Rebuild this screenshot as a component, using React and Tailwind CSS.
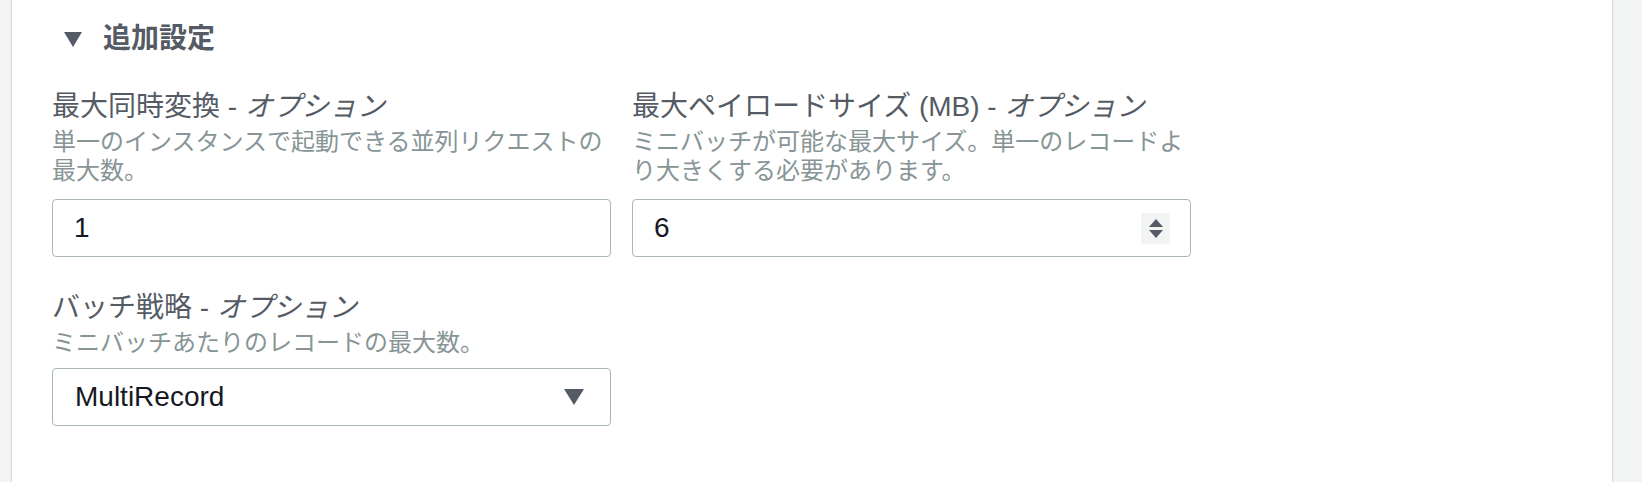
const font = {
  fontFamily: '"Liberation Sans", "Noto Sans CJK JP", sans-serif',
};

// Label + description block for a form field
function FieldHeader({ label, desc }) {
  return (
    <div>
      <div className="text-[28px] leading-[36px] text-[#545b64]">
        {label} - <i>オプション</i>
      </div>
      <div className="mt-[2px] text-[24px] leading-[29px] text-[#879596]">
        {desc}
      </div>
    </div>
  );
}

function Spinner() {
  return (
    <div className="flex h-[31px] w-[29px] flex-col items-center justify-center gap-[3px] bg-[#f2f3f3]">
      <svg width="14" height="8" viewBox="0 0 14 8">
        <path d="M7 0 L14 8 L0 8 Z" fill="#545b64" />
      </svg>
      <svg width="14" height="8" viewBox="0 0 14 8">
        <path d="M0 0 L14 0 L7 8 Z" fill="#545b64" />
      </svg>
    </div>
  );
}

export default function App() {
  return (
    <div className="flex h-[482px] w-[1642px] bg-[#f2f3f3]" style={font}>
      <div className="w-[11px]" />
      <div className="flex-1 border-x border-[#d5dbdb] bg-white pl-[40px] pt-[21px]">
        {/* Section header */}
        <div className="flex items-center">
          <svg width="18" height="15" viewBox="0 0 18 15" className="ml-[12px]">
            <path d="M0 0 L18 0 L9 15 Z" fill="#545b64" />
          </svg>
          <span className="ml-[21px] text-[28px] font-bold leading-[36px] text-[#545b64]">
            追加設定
          </span>
        </div>

        <div className="mt-[32px] flex gap-[21px]">
          <div className="w-[559px]">
            <FieldHeader
              label="最大同時変換"
              desc="単一のインスタンスで起動できる並列リクエストの最大数。"
            />
            <div className="mt-[14px] flex h-[58px] items-center rounded-[4px] border border-[#aab7b8] pl-[21px] text-[28px] text-[#16191f]">
              1
            </div>
          </div>
          <div className="w-[559px]">
            <FieldHeader
              label="最大ペイロードサイズ (MB)"
              desc="ミニバッチが可能な最大サイズ。単一のレコードより大きくする必要があります。"
            />
            <div className="mt-[14px] flex h-[58px] items-center justify-between rounded-[4px] border border-[#aab7b8] pl-[21px] pr-[20px] text-[28px] text-[#16191f]">
              <span>6</span>
              <Spinner />
            </div>
          </div>
        </div>

        <div className="mt-[33px] w-[559px]">
          <FieldHeader
            label="バッチ戦略"
            desc="ミニバッチあたりのレコードの最大数。"
          />
          <div className="mt-[11px] flex h-[58px] items-center justify-between rounded-[4px] border border-[#aab7b8] pl-[22px] pr-[26px] text-[28px] text-[#16191f]">
            <span>MultiRecord</span>
            <svg width="20" height="16" viewBox="0 0 20 16">
              <path d="M0 0 L20 0 L10 16 Z" fill="#545b64" />
            </svg>
          </div>
        </div>
      </div>
      <div className="w-[29px]" />
    </div>
  );
}
